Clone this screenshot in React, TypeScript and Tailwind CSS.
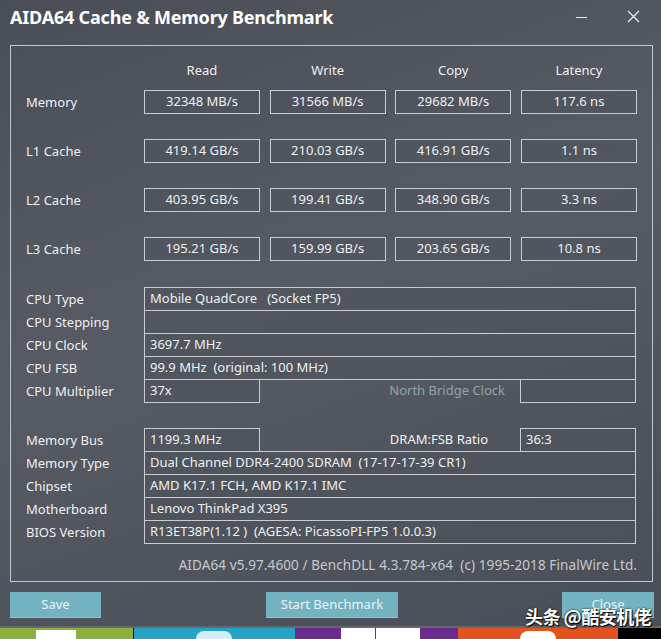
import React from "react";

const FONT = "font-['Noto_Sans','Open_Sans',sans-serif]";

const bench = [
  { label: "Memory", v: ["32348 MB/s", "31566 MB/s", "29682 MB/s", "117.6 ns"] },
  { label: "L1 Cache", v: ["419.14 GB/s", "210.03 GB/s", "416.91 GB/s", "1.1 ns"] },
  { label: "L2 Cache", v: ["403.95 GB/s", "199.41 GB/s", "348.90 GB/s", "3.3 ns"] },
  { label: "L3 Cache", v: ["195.21 GB/s", "159.99 GB/s", "203.65 GB/s", "10.8 ns"] },
];

const box = "h-[24px] border border-[#c9ccd1] bg-[#4f545c]/60 flex items-center whitespace-pre";

function Label({ children }: { children: React.ReactNode }) {
  return <div className="w-[118px] shrink-0 text-[13px] text-[#eef0f2] leading-none">{children}</div>;
}

function InfoRow({ label, value }: { label: string; value: string }) {
  return (
    <div className="flex items-center -mt-px">
      <Label>{label}</Label>
      <div className={`${box} w-[492px] px-[5px] text-[13px] text-[#eef0f2]`}>{value}</div>
    </div>
  );
}

function Button({ w, children }: { w: string; children: React.ReactNode }) {
  return (
    <div className={`${w} h-[26px] bg-[#72b2c1] border-b border-[#8cc3cf] flex items-center justify-center text-[13px] text-[#eaf3f5]`}>
      {children}
    </div>
  );
}

export default function App() {
  return (
    <div className={`${FONT} relative w-[661px] h-[639px] overflow-hidden bg-[linear-gradient(160deg,#494e57_0%,#565b64_45%,#50555d_70%,#4a4f57_100%)]`}>
      {/* title bar */}
      <div className="h-[45px] flex items-start pl-[10px] pr-[20px] pt-[4px]">
        <div className="text-[18px] font-bold text-white tracking-[-0.2px]">AIDA64 Cache &amp; Memory Benchmark</div>
        <div className="ml-auto flex items-center gap-[40px] pt-[6px]">
          <div className="w-[11px] h-px bg-[#e6e8ea] mt-[2px]" />
          <svg width="13" height="13" viewBox="0 0 13 13" className="mr-[1px]">
            <path d="M1 1L12 12M12 1L1 12" stroke="#eef0f2" strokeWidth="1.2" />
          </svg>
        </div>
      </div>

      {/* group box */}
      <div className="ml-[10px] w-[643px] h-[537px] border border-[#c3c6cb] pl-[15px] pt-[15px] flex flex-col">
        {/* bench header */}
        <div className="grid grid-cols-[108.3px_repeat(4,116px)] gap-x-[9.67px] items-center">
          <div />
          {["Read", "Write", "Copy", "Latency"].map((h) => (
            <div key={h} className="h-[20px] flex items-center justify-center text-[13px] text-[#eef0f2]">{h}</div>
          ))}
        </div>
        <div className="mt-[9px] flex flex-col gap-[25px]">
          {bench.map((r) => (
            <div key={r.label} className="grid grid-cols-[108.3px_repeat(4,116px)] gap-x-[9.67px] items-center">
              <div className="text-[13px] text-[#eef0f2] leading-none">{r.label}</div>
              {r.v.map((v, i) => (
                <div key={i} className={`${box} justify-center text-[13px] text-[#eef0f2]`}>{v}</div>
              ))}
            </div>
          ))}
        </div>

        {/* cpu info */}
        <div className="mt-[27px] flex flex-col">
          <InfoRow label="CPU Type" value="Mobile QuadCore   (Socket FP5)" />
          <InfoRow label="CPU Stepping" value="" />
          <InfoRow label="CPU Clock" value="3697.7 MHz" />
          <InfoRow label="CPU FSB" value="99.9 MHz  (original: 100 MHz)" />
          <div className="flex items-center -mt-px">
            <Label>CPU Multiplier</Label>
            <div className={`${box} w-[116px] px-[5px] text-[13px] text-[#eef0f2]`}>37x</div>
            <div className="w-[260px] pr-[15px] text-right text-[13px] text-[#8fa5a6]">North Bridge Clock</div>
            <div className={`${box} w-[116px]`} />
          </div>
        </div>

        {/* memory info */}
        <div className="mt-[25px] flex flex-col">
          <div className="flex items-center">
            <Label>Memory Bus</Label>
            <div className={`${box} w-[116px] px-[5px] text-[13px] text-[#eef0f2]`}>1199.3 MHz</div>
            <div className="w-[260px] pr-[32px] text-right text-[13px] text-[#eef0f2]">DRAM:FSB Ratio</div>
            <div className={`${box} w-[116px] px-[5px] text-[13px] text-[#eef0f2]`}>36:3</div>
          </div>
          <InfoRow label="Memory Type" value="Dual Channel DDR4-2400 SDRAM  (17-17-17-39 CR1)" />
          <InfoRow label="Chipset" value="AMD K17.1 FCH, AMD K17.1 IMC" />
          <InfoRow label="Motherboard" value="Lenovo ThinkPad X395" />
          <InfoRow label="BIOS Version" value="R13ET38P(1.12 )  (AGESA: PicassoPI-FP5 1.0.0.3)" />
        </div>

        {/* footer */}
        <div className="mt-[11px] w-[611px] text-right text-[13.5px] text-[#c4c8cc] [font-stretch:condensed] tracking-[0.1px] whitespace-pre">
          AIDA64 v5.97.4600 / BenchDLL 4.3.784-x64  (c) 1995-2018 FinalWire Ltd.
        </div>
      </div>

      {/* buttons */}
      <div className="mt-[10px] px-[10px] flex items-start">
        <Button w="w-[91px]">Save</Button>
        <div className="ml-[165px]">
          <Button w="w-[132px]">Start Benchmark</Button>
        </div>
        <div className="ml-auto mr-[-3px]">
          <Button w="w-[92px]">Close</Button>
        </div>
      </div>

      {/* desktop strip */}
      <div className="absolute left-0 right-0 top-[626px] h-[2px] bg-[#646970]" />
      <div className="absolute left-0 right-0 top-[628px] h-[11px] flex">
        <div className="w-[133px] bg-[#8db03c] relative">
          <div className="absolute left-[36px] top-[2px] w-[40px] h-[9px] bg-white" />
        </div>
        <div className="w-px bg-black" />
        <div className="w-[161px] bg-[#25a3c6] relative">
          <div className="absolute left-[62px] top-[3px] w-[36px] h-[8px] rounded-t-full bg-white/80" />
        </div>
        <div className="w-[46px] bg-[#6a2b8c]" />
        <div className="w-[34px] bg-white" />
        <div className="w-px bg-[#6a2b8c]" />
        <div className="w-[44px] bg-white" />
        <div className="w-[38px] bg-[#6a2b8c]" />
        <div className="w-[160px] bg-[#e3521f] relative">
          <div className="absolute left-[62px] top-[3px] w-[36px] h-[8px] rounded-t-full bg-white" />
        </div>
        <div className="flex-1 bg-black" />
      </div>

      {/* watermark */}
      <div className="absolute left-[525px] top-[603px] text-[18px] font-bold text-white [text-shadow:0_0_2px_#000,1px_1px_1px_#000] font-['Noto_Sans_CJK_SC',sans-serif] tracking-[-0.5px]">
        头条 @酷安机佬
      </div>
    </div>
  );
}
